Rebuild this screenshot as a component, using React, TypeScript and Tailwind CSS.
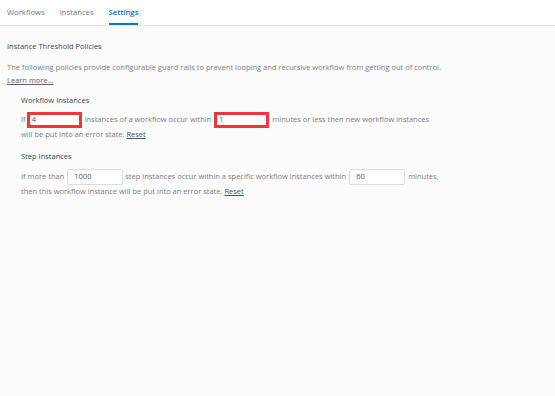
import React from "react";

const font = { fontFamily: '"Open Sans", "Liberation Sans", sans-serif' };

function Field({ value, w, red }: { value: string; w: string; red?: boolean }) {
  return (
    <span
      className={
        red
          ? `inline-flex items-center h-[16px] ${w} border-[3px] border-[#f0353b] bg-white px-[2px] text-[#555] mx-[3px]`
          : `inline-flex items-center h-[16px] ${w} border border-[#dcdcdc] rounded-[2px] bg-white px-[6px] text-[#555] mx-[3px]`
      }
    >
      {value}
    </span>
  );
}

export default function App() {
  return (
    <div className="w-[555px] h-[396px] bg-[#fbfbfb] text-[7.5px] leading-none" style={font}>
      <div className="h-[26px] bg-white border-b border-[#e3e3e3] flex items-end pl-[7px] gap-[15px] text-[7.7px]">
        <div className="pb-[8px] text-[#777]">Workflows</div>
        <div className="pb-[8px] text-[#777]">Instances</div>
        <div className="pb-[6px] border-b-2 border-[#0a74cf] text-[#0a74cf] font-semibold">Settings</div>
      </div>
      <div className="px-[7px] pt-[17px]">
        <div className="text-[#3e4652]">Instance Threshold Policies</div>
        <div className="mt-[13px] text-[#7b7f86]">
          The following policies provide configurable guard rails to prevent looping and recursive workflow from getting out of control.
        </div>
        <div className="mt-[6px] text-[#5d6570] underline">Learn more...</div>
        <div className="pl-[14px]">
          <div className="mt-[12px] text-[#3e4652]">Workflow Instances</div>
          <div className="mt-[8px] flex items-center text-[#7b7f86]">
            <span>If</span>
            <span className="-ml-[2px]"><Field value="4" w="w-[55px]" red /></span>
            <span>instances of a workflow occur within</span>
            <Field value="1" w="w-[55px]" red />
            <span>minutes or less then new workflow instances</span>
          </div>
          <div className="mt-[3px] text-[#7b7f86]">
            will be put into an error state. <span className="underline text-[#4d5560]">Reset</span>
          </div>
          <div className="mt-[14px] text-[#3e4652]">Step Instances</div>
          <div className="mt-[9px] flex items-center text-[#7b7f86]">
            <span>If more than</span>
            <Field value="1000" w="w-[56px]" />
            <span className="-ml-[1px]">step instances occur within a specific workflow instances within</span>
            <Field value="60" w="w-[56px]" />
            <span>minutes,</span>
          </div>
          <div className="mt-[3px] text-[#7b7f86]">
            then this workflow instance will be put into an error state. <span className="underline text-[#4d5560]">Reset</span>
          </div>
        </div>
      </div>
    </div>
  );
}
